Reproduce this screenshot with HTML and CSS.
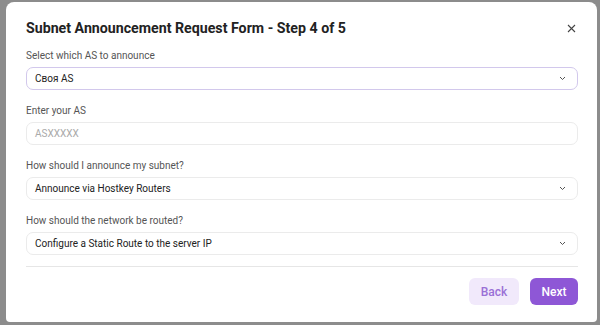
FILE: index.html
```html
<!DOCTYPE html>
<html lang="en">

<head>
    <meta charset="UTF-8">
    <meta name="viewport" content="width=device-width, initial-scale=1.0">
    <title>Subnet Announcement Request Form</title>
    <link rel="stylesheet" href="styles.css">
</head>

<body>
    <div class="modal">
        <div class="modal_head">
            <h2>Subnet Announcement Request Form - Step 4 of 5</h2>
            <svg class="close" width="9" height="9" viewBox="0 0 9 9">
                <path d="M1 1L8 8M8 1L1 8" stroke="#444" stroke-width="1.1" fill="none" />
            </svg>
        </div>
        <div class="field">
            <label>Select which AS to announce</label>
            <div class="select active">
                <span>Своя AS</span>
                <svg class="chevron" width="7" height="5" viewBox="0 0 7 5">
                    <path d="M1 1L3.5 3.5L6 1" stroke="#555" stroke-width="1" fill="none" />
                </svg>
            </div>
        </div>
        <div class="field">
            <label>Enter your AS</label>
            <div class="select">
                <span class="placeholder">ASXXXXX</span>
            </div>
        </div>
        <div class="field">
            <label>How should I announce my subnet?</label>
            <div class="select">
                <span>Announce via Hostkey Routers</span>
                <svg class="chevron" width="7" height="5" viewBox="0 0 7 5">
                    <path d="M1 1L3.5 3.5L6 1" stroke="#555" stroke-width="1" fill="none" />
                </svg>
            </div>
        </div>
        <div class="field">
            <label>How should the network be routed?</label>
            <div class="select">
                <span>Configure a Static Route to the server IP</span>
                <svg class="chevron" width="7" height="5" viewBox="0 0 7 5">
                    <path d="M1 1L3.5 3.5L6 1" stroke="#555" stroke-width="1" fill="none" />
                </svg>
            </div>
        </div>
        <div class="modal_foot">
            <button class="back">Back</button>
            <button class="next">Next</button>
        </div>
    </div>
</body>

</html>
```

FILE: styles.css
```css
body {
    margin: 0;
    padding: 2px 3px 3px 6px;
    background-color: #8c8c8c;
    font-family: Roboto, "Liberation Sans", sans-serif;
}

.modal {
    height: 320px;
    box-sizing: border-box;
    background-color: #fff;
    border-radius: 8px 8px 4px 4px;
    padding: 16px 19px 0 20px;
}

.modal_head {
    display: flex;
    justify-content: space-between;
    align-items: center;
    height: 20px;
    margin-bottom: 11px;
}

.modal_head h2 {
    margin: 0;
    font-size: 14.2px;
    font-weight: 700;
    color: #222;
}

.close {
    margin-right: 2px;
}

.field {
    margin-bottom: 14px;
}

.field label {
    display: block;
    height: 14px;
    line-height: 14px;
    font-size: 10px;
    color: #555;
    margin-bottom: 4px;
}

.select {
    height: 23px;
    box-sizing: border-box;
    border: 1px solid #ebebeb;
    border-radius: 7px;
    padding: 0 11px 0 8px;
    display: flex;
    justify-content: space-between;
    align-items: center;
    font-size: 10px;
    color: #222;
}

.active {
    border-color: #d2c8ec;
}

.placeholder {
    color: #aaa;
}

.modal_foot {
    border-top: 1px solid #e6e6e6;
    margin-top: -3px;
    padding-top: 11px;
    display: flex;
    justify-content: flex-end;
    gap: 11px;
}

.modal_foot button {
    height: 27px;
    border: none;
    border-radius: 6px;
    font-family: Roboto, "Liberation Sans", sans-serif;
    font-size: 12px;
    font-weight: 500;
}

.back {
    width: 50px;
    background-color: #f1e9fb;
    color: #9a70d6;
}

.next {
    width: 48px;
    background-color: #8e57d6;
    color: #fff;
}
```
